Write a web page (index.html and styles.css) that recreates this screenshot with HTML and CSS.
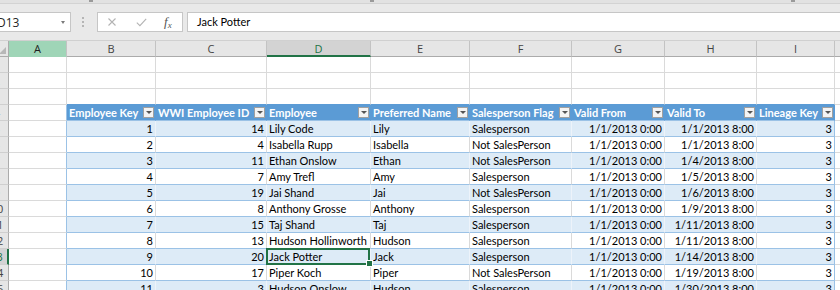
FILE: index.html
```html
<!DOCTYPE html>
<html>
<head>
<meta charset="utf-8">
<title>Employee</title>
<link rel="stylesheet" href="styles.css">
</head>
<body>
<div class="ribbon-edge"><span class="mark m1"></span><span class="mark m2"></span><span class="mark m3"></span></div>
<div class="fbar">
  <div class="namebox"><span>D13</span><span class="nb-arrow"></span></div>
  <div class="grip"><i></i><i></i><i></i></div>
  <div class="fxbox">
    <svg class="ic-x" width="8" height="8" viewBox="0 0 8 8"><path d="M0.5 0.5L7.5 7.5M7.5 0.5L0.5 7.5" stroke="#b3b3b3" stroke-width="1.1" fill="none"/></svg>
    <svg class="ic-ok" width="11" height="9" viewBox="0 0 11 9"><path d="M0.8 4.6L3.9 7.6L10.2 0.8" stroke="#b3b3b3" stroke-width="1.1" fill="none"/></svg>
    <span class="fx">f<span class="sub">x</span></span>
  </div>
  <div class="finput">Jack Potter</div>
</div>
<div class="sheet">
  <div class="row">
    <div class="corner"><span class="tri"></span></div>
    <div class="ch hot">A</div><div class="ch">B</div><div class="ch">C</div><div class="ch cur">D</div><div class="ch">E</div><div class="ch">F</div><div class="ch">G</div><div class="ch">H</div><div class="ch">I</div><div class="ch">J</div>
  </div>
  <div class="row">
    <div class="rh">1</div><div class="c"></div><div class="c"></div><div class="c"></div><div class="c"></div><div class="c"></div><div class="c"></div><div class="c"></div><div class="c"></div><div class="c"></div><div class="c"></div>
  </div>
  <div class="row">
    <div class="rh">2</div><div class="c"></div><div class="c"></div><div class="c"></div><div class="c"></div><div class="c"></div><div class="c"></div><div class="c"></div><div class="c"></div><div class="c"></div><div class="c"></div>
  </div>
  <div class="row">
    <div class="rh">3</div><div class="c"></div><div class="c top"></div><div class="c top"></div><div class="c top"></div><div class="c top"></div><div class="c top"></div><div class="c top"></div><div class="c top"></div><div class="c top"></div><div class="c"></div>
  </div>
  <div class="row">
    <div class="rh">4</div><div class="c a"></div>
    <div class="th"><span>Employee Key</span><i class="dd"></i></div>
    <div class="th"><span>WWI Employee ID</span><i class="dd"></i></div>
    <div class="th"><span>Employee</span><i class="dd"></i></div>
    <div class="th"><span>Preferred Name</span><i class="dd"></i></div>
    <div class="th"><span>Salesperson Flag</span><i class="dd"></i></div>
    <div class="th"><span>Valid From</span><i class="dd"></i></div>
    <div class="th"><span>Valid To</span><i class="dd"></i></div>
    <div class="th"><span>Lineage Key</span><i class="dd"></i></div>
    <div class="c"></div>
  </div>
  <div class="row alt">
    <div class="rh">5</div><div class="c a"></div><div class="c t n">1</div><div class="c t n">14</div><div class="c t">Lily Code</div><div class="c t">Lily</div><div class="c t">Salesperson</div><div class="c t n">1/1/2013 0:00</div><div class="c t n">1/1/2013 8:00</div><div class="c t n l">3</div><div class="c"></div>
  </div>
  <div class="row">
    <div class="rh">6</div><div class="c a"></div><div class="c t n">2</div><div class="c t n">4</div><div class="c t">Isabella Rupp</div><div class="c t">Isabella</div><div class="c t">Not SalesPerson</div><div class="c t n">1/1/2013 0:00</div><div class="c t n">1/1/2013 8:00</div><div class="c t n l">3</div><div class="c"></div>
  </div>
  <div class="row alt">
    <div class="rh">7</div><div class="c a"></div><div class="c t n">3</div><div class="c t n">11</div><div class="c t">Ethan Onslow</div><div class="c t">Ethan</div><div class="c t">Not SalesPerson</div><div class="c t n">1/1/2013 0:00</div><div class="c t n">1/4/2013 8:00</div><div class="c t n l">3</div><div class="c"></div>
  </div>
  <div class="row">
    <div class="rh">8</div><div class="c a"></div><div class="c t n">4</div><div class="c t n">7</div><div class="c t">Amy Trefl</div><div class="c t">Amy</div><div class="c t">Salesperson</div><div class="c t n">1/1/2013 0:00</div><div class="c t n">1/5/2013 8:00</div><div class="c t n l">3</div><div class="c"></div>
  </div>
  <div class="row alt">
    <div class="rh">9</div><div class="c a"></div><div class="c t n">5</div><div class="c t n">19</div><div class="c t">Jai Shand</div><div class="c t">Jai</div><div class="c t">Not SalesPerson</div><div class="c t n">1/1/2013 0:00</div><div class="c t n">1/6/2013 8:00</div><div class="c t n l">3</div><div class="c"></div>
  </div>
  <div class="row">
    <div class="rh">10</div><div class="c a"></div><div class="c t n">6</div><div class="c t n">8</div><div class="c t">Anthony Grosse</div><div class="c t">Anthony</div><div class="c t">Salesperson</div><div class="c t n">1/1/2013 0:00</div><div class="c t n">1/9/2013 8:00</div><div class="c t n l">3</div><div class="c"></div>
  </div>
  <div class="row alt">
    <div class="rh">11</div><div class="c a"></div><div class="c t n">7</div><div class="c t n">15</div><div class="c t">Taj Shand</div><div class="c t">Taj</div><div class="c t">Salesperson</div><div class="c t n">1/1/2013 0:00</div><div class="c t n">1/11/2013 8:00</div><div class="c t n l">3</div><div class="c"></div>
  </div>
  <div class="row">
    <div class="rh">12</div><div class="c a"></div><div class="c t n">8</div><div class="c t n">13</div><div class="c t">Hudson Hollinworth</div><div class="c t">Hudson</div><div class="c t">Salesperson</div><div class="c t n">1/1/2013 0:00</div><div class="c t n">1/11/2013 8:00</div><div class="c t n l">3</div><div class="c"></div>
  </div>
  <div class="row alt">
    <div class="rh cur">13</div><div class="c a"></div><div class="c t n">9</div><div class="c t n">20</div><div class="c t active">Jack Potter</div><div class="c t">Jack</div><div class="c t">Salesperson</div><div class="c t n">1/1/2013 0:00</div><div class="c t n">1/14/2013 8:00</div><div class="c t n l">3</div><div class="c"></div>
  </div>
  <div class="row">
    <div class="rh">14</div><div class="c a"></div><div class="c t n">10</div><div class="c t n">17</div><div class="c t">Piper Koch</div><div class="c t">Piper</div><div class="c t">Not SalesPerson</div><div class="c t n">1/1/2013 0:00</div><div class="c t n">1/19/2013 8:00</div><div class="c t n l">3</div><div class="c"></div>
  </div>
  <div class="row alt">
    <div class="rh">15</div><div class="c a"></div><div class="c t n">11</div><div class="c t n">3</div><div class="c t">Hudson Onslow</div><div class="c t">Hudson</div><div class="c t">Salesperson</div><div class="c t n">1/1/2013 0:00</div><div class="c t n">1/30/2013 8:00</div><div class="c t n l">3</div><div class="c"></div>
  </div>
</div>
</body>
</html>
```
FILE: styles.css
```css
* { box-sizing: border-box; margin: 0; padding: 0; }
html, body { width: 840px; height: 290px; overflow: hidden; }
body { background: #e9e9e9; font-family: Lato, "Liberation Sans", sans-serif; color: #000; }

.ribbon-edge { height: 4px; background: #e2e2e2; border-bottom: 1px solid #d3d3d3; display: flex; align-items: flex-start; }
.mark { display: block; width: 4px; height: 2px; background: #9a9a9a; }
.m1 { margin-left: 89px; }
.m2 { margin-left: 277px; }
.m3 { margin-left: 417px; }

.fbar { height: 36px; display: flex; align-items: flex-start; padding-top: 8px; overflow: hidden; }
.namebox { flex: none; margin-left: -14px; width: 85px; height: 20px; background: #fff; border: 1px solid #c6c6c6; display: flex; align-items: center; justify-content: space-between; padding: 0 5px 0 10px; font-family: "Open Sans", sans-serif; font-size: 12px; color: #262626; }
.nb-arrow { width: 0; height: 0; border-left: 2.5px solid transparent; border-right: 2.5px solid transparent; border-top: 3px solid #7a7a7a; }
.grip { flex: none; margin: 5px 0 0 11px; display: flex; flex-direction: column; gap: 2px; }
.grip i { display: block; width: 2px; height: 2px; background: #b5b5b5; }
.fxbox { flex: none; margin-left: 13px; width: 86px; height: 20px; background: #fff; border: 1px solid #c6c6c6; display: flex; align-items: center; padding-left: 10px; }
.ic-ok { margin-left: 20px; }
.fx { margin-left: 17px; font-family: "Liberation Serif", serif; font-style: italic; font-size: 13px; color: #555; line-height: 12px; }
.fx .sub { font-size: 9px; position: relative; top: 2px; }
.finput { flex: none; margin-left: 4px; width: 700px; height: 20px; background: #fff; border: 1px solid #c6c6c6; padding-left: 9px; font-size: 11px; line-height: 18px; color: #000; }

.sheet { display: grid; grid-template-columns: 23px 58px 89px 111px 104px 99px 102px 93px 92px 78px 60px; grid-auto-rows: 16px; margin-left: -14px; width: 909px; border-top: 1px solid #d0d0d0; background: #fff; }
.row { display: contents; }

.corner, .ch, .rh { background: #e6e6e6; font-family: "Open Sans", sans-serif; font-size: 11px; color: #444; line-height: 15px; text-align: center; white-space: nowrap; overflow: hidden; }
.corner { border-right: 1px solid #ababab; border-bottom: 1px solid #ababab; display: flex; justify-content: flex-end; align-items: flex-end; padding: 0 2px 2px 0; }
.tri { width: 0; height: 0; border-left: 7px solid transparent; border-bottom: 7px solid #b7b7b7; }
.ch { border-right: 1px solid #c3c3c3; border-bottom: 1px solid #ababab; }
.ch.hot { background: #9fd5b7; color: #1e1e1e; border-bottom-color: #9fd5b7; }
.ch.cur { background: #d3d3d3; color: #217346; border-bottom: 2px solid #217346; }
.rh { border-right: 1px solid #ababab; border-bottom: 1px solid #cfcfcf; }
.rh.cur { background: #d3d3d3; color: #217346; border-right: 2px solid #217346; }

.c { border-right: 1px solid #dadada; border-bottom: 1px solid #dadada; font-size: 11px; line-height: 15px; padding: 0 2px; white-space: nowrap; overflow: hidden; }
.c.n { text-align: right; }
.c.a { border-right-color: #9bc2e6; }
.c.top { border-bottom-color: #5b9bd5; }
.c.t { border-bottom-color: #9bc2e6; }
.c.l { border-right-color: #9bc2e6; }
.alt .t { background: #ddebf7; border-right-color: #edf3fa; }
.alt .t.l { border-right-color: #9bc2e6; }

.th { background: #5b9bd5; color: #fff; font-weight: 700; font-size: 11px; line-height: 15px; display: flex; align-items: center; justify-content: space-between; padding: 0 1px 0 2px; border-right: 1px solid #5b9bd5; border-bottom: 1px solid #9bc2e6; white-space: nowrap; overflow: hidden; }
.dd { flex: none; width: 11px; height: 11px; margin-top: -1px; background: #f4f4f4; border: 1px solid #a0a0a0; display: flex; align-items: center; justify-content: center; }
.dd::after { content: ""; width: 0; height: 0; border-left: 3px solid transparent; border-right: 3px solid transparent; border-top: 3px solid #555; }

.c.active { position: relative; overflow: visible; }
.c.active::after { content: ""; position: absolute; left: -1px; top: -1px; right: 0; bottom: -1px; border: 2px solid #217346; z-index: 2; }
.c.active::before { content: ""; position: absolute; right: -3px; bottom: -3px; width: 5px; height: 5px; background: #217346; border: 1px solid #fff; z-index: 3; }
```
